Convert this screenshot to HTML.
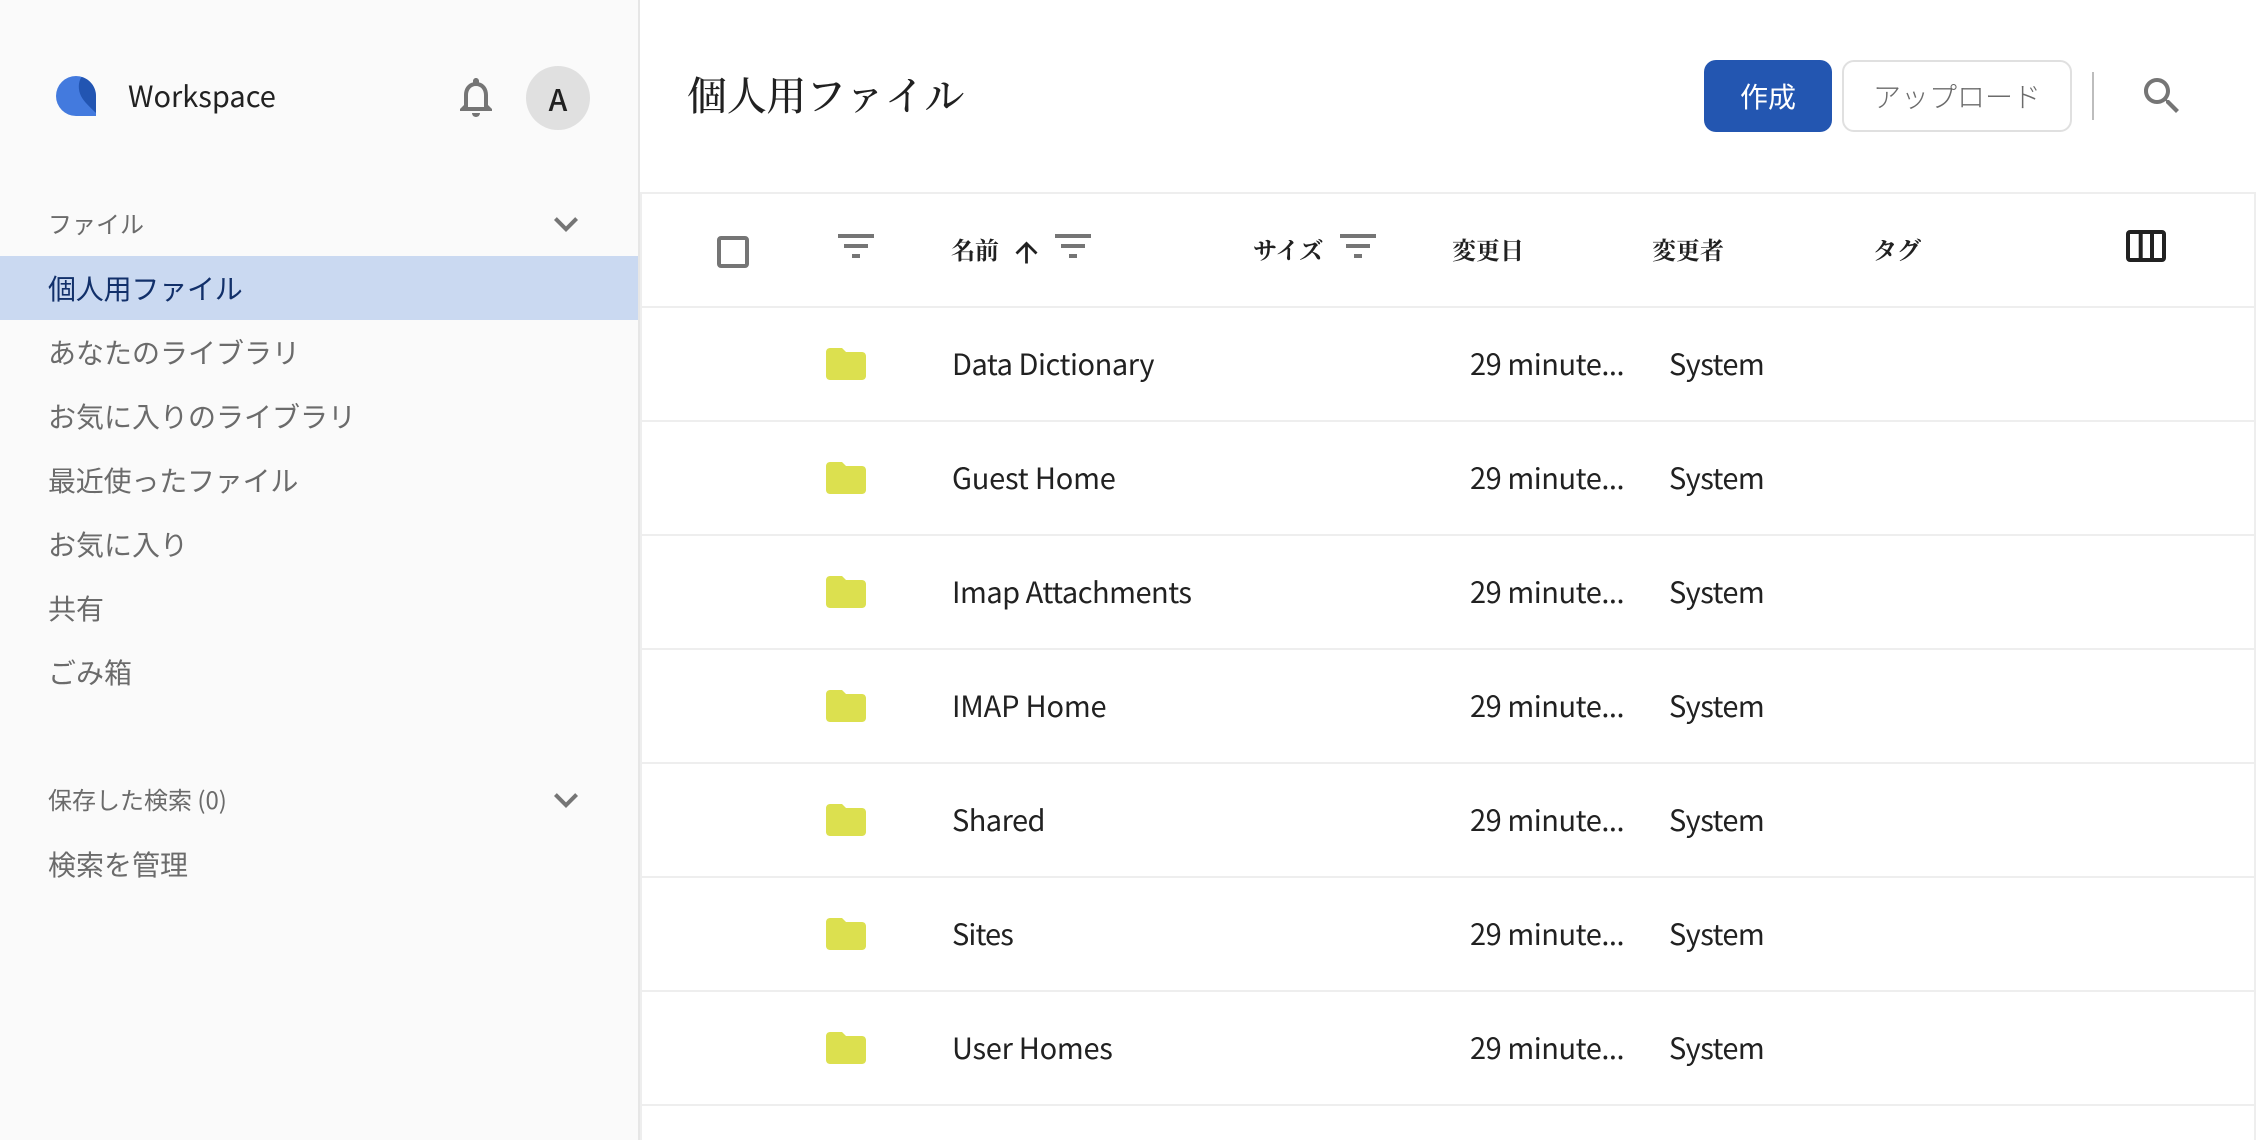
<!DOCTYPE html>
<html lang="ja">
<head>
<meta charset="utf-8">
<title>個人用ファイル</title>
<style>
html,body{margin:0;padding:0;width:2256px;height:1140px;overflow:hidden;background:#fff}
body{position:relative;font-family:"Noto Sans CJK JP","Liberation Sans",sans-serif;color:#212121}
.a{position:absolute}
.t{position:absolute;white-space:nowrap;line-height:40px;height:40px}
.side{position:absolute;left:0;top:0;width:638px;height:1140px;background:#fafafa}
.nav{font-size:28px;color:#6b6b6b;left:48px;font-weight:400}
.sec{font-size:24px;color:#6b6b6b;left:48px;font-weight:400}
.line{position:absolute;background:#eeeeee}
.h{font-family:"Noto Serif CJK JP","Noto Serif CJK SC",serif;font-weight:700;font-size:24px;color:#212121;top:229px}
.r{font-size:29px;color:#212121;margin-top:-1px}
.d{left:1470px;letter-spacing:-.45px}
.s{left:1669px;letter-spacing:-.6px}
svg{position:absolute;display:block}
</style>
</head>
<body>
<div class="side"></div>
<div class="line" style="left:638px;top:0;width:2px;height:1140px;background:#e6e6e6"></div>
<div class="line" style="left:640px;top:192px;width:2px;height:948px"></div>
<div class="line" style="left:2254px;top:192px;width:2px;height:948px"></div>

<svg style="left:56px;top:76px" width="40" height="40" viewBox="0 0 40 40"><path fill="#437ade" d="M20 0A20 20 0 0 1 40 20V40H20A20 20 0 0 1 20 0z"/><path fill="#2255b2" d="M25.5 1C22 6 22 14 25 20C28 26 35 32 40 37V20C40 10 33 3 25.5 1z"/></svg>
<div class="t" style="left:128px;top:75px;font-size:29px;color:#212121">Workspace</div>
<svg style="left:452px;top:73px" width="48" height="48" viewBox="0 0 24 24"><path fill="#757575" d="M12 22c1.1 0 2-.9 2-2h-4c0 1.1.9 2 2 2zm6-6v-5c0-3.07-1.63-5.64-4.500-6.320V4c0-.83-.67-1.500-1.500-1.500s-1.500.67-1.500 1.500v.68C7.640 5.360 6 7.920 6 11v5l-2 2v1h16v-1l-2-2zm-2 1H8v-6c0-2.480 1.510-4.500 4-4.500s4 2.020 4 4.500v6z"/></svg>
<div class="a" style="left:526px;top:66px;width:64px;height:64px;border-radius:50%;background:#e0e0e0"></div>
<div class="t" style="left:526px;top:78px;width:64px;text-align:center;font-size:30px;font-weight:500;color:#212121">A</div>

<div class="t sec" style="top:203px">ファイル</div>
<svg style="left:542px;top:200px" width="48" height="48" viewBox="0 0 24 24"><path fill="#757575" d="M16.59 8.59L12 13.17 7.41 8.59 6 10l6 6 6-6z"/></svg>
<div class="a" style="left:0;top:256px;width:638px;height:64px;background:#cad9f1"></div>
<div class="t nav" style="top:268px;color:#12306a;letter-spacing:-.2px">個人用ファイル</div>
<div class="t nav" style="top:332px">あなたのライブラリ</div>
<div class="t nav" style="top:396px">お気に入りのライブラリ</div>
<div class="t nav" style="top:460px;letter-spacing:-.2px">最近使ったファイル</div>
<div class="t nav" style="top:524px">お気に入り</div>
<div class="t nav" style="top:588px">共有</div>
<div class="t nav" style="top:652px">ごみ箱</div>
<div class="t sec" style="top:779px">保存した検索 (0)</div>
<svg style="left:542px;top:776px" width="48" height="48" viewBox="0 0 24 24"><path fill="#757575" d="M16.59 8.59L12 13.17 7.41 8.59 6 10l6 6 6-6z"/></svg>
<div class="t nav" style="top:844px">検索を管理</div>

<div class="t" style="left:687px;top:69px;height:50px;line-height:50px;font-family:'Noto Serif CJK JP','Noto Serif CJK SC',serif;font-size:40px;font-weight:500;letter-spacing:-.3px;color:#212121">個人用ファイル</div>
<div class="a" style="left:1704px;top:60px;width:128px;height:72px;border-radius:12px;background:#2356b1"></div>
<div class="t" style="left:1704px;top:76px;width:128px;text-align:center;font-size:28px;color:#fff;font-weight:400">作成</div>
<div class="a" style="left:1842px;top:60px;width:230px;height:72px;border-radius:12px;border:2px solid #e0e0e0;box-sizing:border-box;background:#fff"></div>
<div class="t" style="left:1842px;top:76px;width:230px;text-align:center;font-size:28px;color:#6b6b6b;font-weight:300">アップロード</div>
<div class="a" style="left:2092px;top:72px;width:2px;height:48px;background:#bdbdbd"></div>
<svg style="left:2138px;top:72px" width="48" height="48" viewBox="0 0 24 24"><path fill="#757575" d="M15.5 14h-.79l-.28-.27C15.41 12.59 16 11.11 16 9.5 16 5.91 13.09 3 9.5 3S3 5.91 3 9.5 5.91 16 9.5 16c1.61 0 3.09-.59 4.23-1.57l.27.28v.79l5 4.99L20.49 19l-4.99-5zm-6 0C7.01 14 5 11.99 5 9.5S7.01 5 9.5 5 14 7.01 14 9.5 11.99 14 9.5 14z"/></svg>

<div class="line" style="left:640px;top:192px;width:1616px;height:2px"></div>

<svg style="left:717px;top:236px" width="32" height="32" viewBox="0 0 32 32"><rect x="2" y="2" width="28" height="28" rx="2" fill="none" stroke="#757575" stroke-width="4"/></svg>
<svg style="left:838px;top:234px" width="36" height="24" viewBox="0 0 36 24"><path fill="#757575" d="M0 0h36v4H0zM6 10h24v4H6zM14 20h8v4h-8z"/></svg>
<div class="t h" style="left:951px">名前</div>
<svg style="left:1009.500px;top:236px" width="33" height="33" viewBox="0 0 24 24"><path fill="#212121" d="M4 12l1.41 1.41L11 7.83V20h2V7.83l5.58 5.59L20 12l-8-8-8 8z"/></svg>
<svg style="left:1055px;top:234px" width="36" height="24" viewBox="0 0 36 24"><path fill="#757575" d="M0 0h36v4H0zM6 10h24v4H6zM14 20h8v4h-8z"/></svg>
<div class="t h" style="left:1253px">サイズ</div>
<svg style="left:1340px;top:234px" width="36" height="24" viewBox="0 0 36 24"><path fill="#757575" d="M0 0h36v4H0zM6 10h24v4H6zM14 20h8v4h-8z"/></svg>
<div class="t h" style="left:1452px">変更日</div>
<div class="t h" style="left:1652px">変更者</div>
<div class="t h" style="left:1873px">タグ</div>
<svg style="left:2126px;top:230px" width="40" height="32" viewBox="0 0 40 32"><rect x="2" y="2" width="36" height="28" rx="2" fill="none" stroke="#212121" stroke-width="4"/><path fill="#212121" d="M12.700 2h4v28h-4zM24 2h4v28h-4z"/></svg>

<div class="line" style="left:640px;top:306px;width:1616px;height:2px"></div>
<svg style="left:822px;top:340px" width="48" height="48" viewBox="0 0 24 24"><path fill="#dce04f" d="M10 4H4c-1.100 0-1.990.9-1.990 2L2 18c0 1.100.9 2 2 2h16c1.100 0 2-.9 2-2V8c0-1.100-.9-2-2-2h-8l-2-2z"/></svg>
<div class="t r" style="left:952px;top:344px;letter-spacing:-.47px">Data Dictionary</div>
<div class="t r d" style="top:344px">29 minute...</div>
<div class="t r s" style="top:344px">System</div>

<div class="line" style="left:640px;top:420px;width:1616px;height:2px"></div>
<svg style="left:822px;top:454px" width="48" height="48" viewBox="0 0 24 24"><path fill="#dce04f" d="M10 4H4c-1.100 0-1.990.9-1.990 2L2 18c0 1.100.9 2 2 2h16c1.100 0 2-.9 2-2V8c0-1.100-.9-2-2-2h-8l-2-2z"/></svg>
<div class="t r" style="left:952px;top:458px;letter-spacing:-.2px">Guest Home</div>
<div class="t r d" style="top:458px">29 minute...</div>
<div class="t r s" style="top:458px">System</div>

<div class="line" style="left:640px;top:534px;width:1616px;height:2px"></div>
<svg style="left:822px;top:568px" width="48" height="48" viewBox="0 0 24 24"><path fill="#dce04f" d="M10 4H4c-1.100 0-1.990.9-1.990 2L2 18c0 1.100.9 2 2 2h16c1.100 0 2-.9 2-2V8c0-1.100-.9-2-2-2h-8l-2-2z"/></svg>
<div class="t r" style="left:952px;top:572px;letter-spacing:-.5px">Imap Attachments</div>
<div class="t r d" style="top:572px">29 minute...</div>
<div class="t r s" style="top:572px">System</div>

<div class="line" style="left:640px;top:648px;width:1616px;height:2px"></div>
<svg style="left:822px;top:682px" width="48" height="48" viewBox="0 0 24 24"><path fill="#dce04f" d="M10 4H4c-1.100 0-1.990.9-1.990 2L2 18c0 1.100.9 2 2 2h16c1.100 0 2-.9 2-2V8c0-1.100-.9-2-2-2h-8l-2-2z"/></svg>
<div class="t r" style="left:952px;top:686px;letter-spacing:-.2px">IMAP Home</div>
<div class="t r d" style="top:686px">29 minute...</div>
<div class="t r s" style="top:686px">System</div>

<div class="line" style="left:640px;top:762px;width:1616px;height:2px"></div>
<svg style="left:822px;top:796px" width="48" height="48" viewBox="0 0 24 24"><path fill="#dce04f" d="M10 4H4c-1.100 0-1.990.9-1.990 2L2 18c0 1.100.9 2 2 2h16c1.100 0 2-.9 2-2V8c0-1.100-.9-2-2-2h-8l-2-2z"/></svg>
<div class="t r" style="left:952px;top:800px;letter-spacing:-.55px">Shared</div>
<div class="t r d" style="top:800px">29 minute...</div>
<div class="t r s" style="top:800px">System</div>

<div class="line" style="left:640px;top:876px;width:1616px;height:2px"></div>
<svg style="left:822px;top:910px" width="48" height="48" viewBox="0 0 24 24"><path fill="#dce04f" d="M10 4H4c-1.100 0-1.990.9-1.990 2L2 18c0 1.100.9 2 2 2h16c1.100 0 2-.9 2-2V8c0-1.100-.9-2-2-2h-8l-2-2z"/></svg>
<div class="t r" style="left:952px;top:914px;letter-spacing:-.9px">Sites</div>
<div class="t r d" style="top:914px">29 minute...</div>
<div class="t r s" style="top:914px">System</div>

<div class="line" style="left:640px;top:990px;width:1616px;height:2px"></div>
<svg style="left:822px;top:1024px" width="48" height="48" viewBox="0 0 24 24"><path fill="#dce04f" d="M10 4H4c-1.100 0-1.990.9-1.990 2L2 18c0 1.100.9 2 2 2h16c1.100 0 2-.9 2-2V8c0-1.100-.9-2-2-2h-8l-2-2z"/></svg>
<div class="t r" style="left:952px;top:1028px;letter-spacing:-.28px">User Homes</div>
<div class="t r d" style="top:1028px">29 minute...</div>
<div class="t r s" style="top:1028px">System</div>

<div class="line" style="left:640px;top:1104px;width:1616px;height:2px"></div>
</body>
</html>
